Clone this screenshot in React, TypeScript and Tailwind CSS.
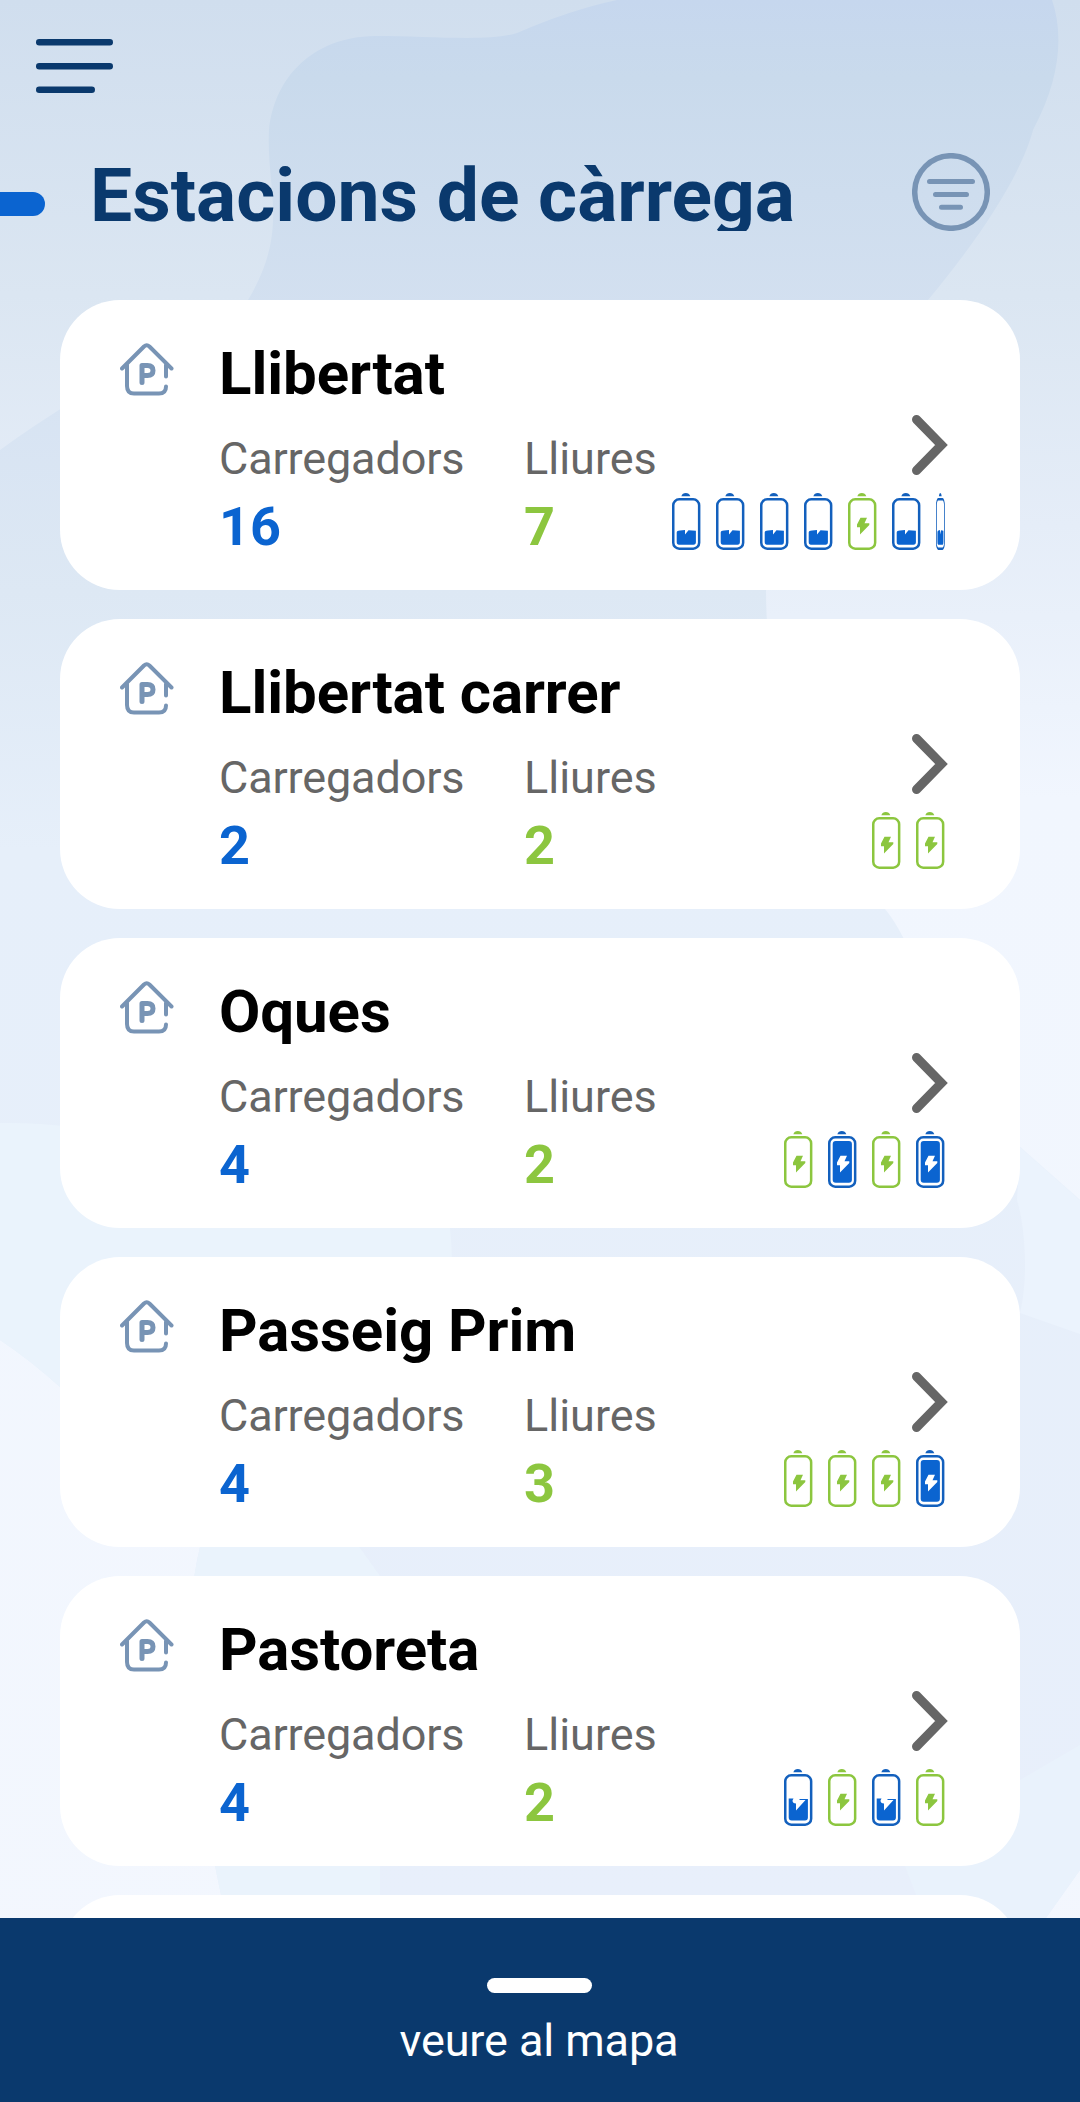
type Charge = 'free' | 'low' | 'half' | 'full';

type Station = {
  name: string;
  chargers: number;
  free: number;
  batteries: Charge[];
  cut?: boolean;
};

const stations: Station[] = [
  { name: 'Llibertat', chargers: 16, free: 7, batteries: ['low', 'low', 'low', 'low', 'free', 'low', 'low'], cut: true },
  { name: 'Llibertat carrer', chargers: 2, free: 2, batteries: ['free', 'free'] },
  { name: 'Oques', chargers: 4, free: 2, batteries: ['free', 'full', 'free', 'full'] },
  { name: 'Passeig Prim', chargers: 4, free: 3, batteries: ['free', 'free', 'free', 'full'] },
  { name: 'Pastoreta', chargers: 4, free: 2, batteries: ['half', 'free', 'half', 'free'] },
];

function Background() {
  return (
    <svg className="absolute inset-0 h-full w-full" viewBox="0 0 1080 2102" aria-hidden="true">
      <defs>
        <linearGradient id="sky" x1="0" y1="0" x2="0" y2="1">
          <stop offset="0" stopColor="#d0deee" />
          <stop offset="0.14" stopColor="#dbe6f2" />
          <stop offset="0.25" stopColor="#e5edf8" />
          <stop offset="0.38" stopColor="#f1f6fe" />
          <stop offset="1" stopColor="#f3f7fe" />
        </linearGradient>
        <linearGradient id="wave" gradientUnits="userSpaceOnUse" x1="0" y1="300" x2="0" y2="1918">
          <stop offset="0" stopColor="#d4e1f2" />
          <stop offset="0.18" stopColor="#dde8f4" />
          <stop offset="0.34" stopColor="#e6effa" />
          <stop offset="1" stopColor="#e8effb" />
        </linearGradient>
        <linearGradient id="blob" gradientUnits="userSpaceOnUse" x1="0" y1="0" x2="0" y2="310">
          <stop offset="0" stopColor="#c6d7ee" />
          <stop offset="0.25" stopColor="#c9daec" />
          <stop offset="1" stopColor="#d3e0f0" />
        </linearGradient>
      </defs>
      <rect width="1080" height="2102" fill="url(#sky)" />
      <path d="M0 450C90 385 180 340 248 300H928C830 400 766 500 766 590C766 740 830 850 885 909C920 950 960 1090 1020 1147L1080 1200V1870L1046 1918H226C200 1800 175 1650 200 1547C200 1480 120 1430 60 1387Q30 1360 0 1340Z" fill="url(#wave)" />
      <path d="M248 300C290 230 266 190 269 130C274 80 310 37 375 36C430 36 490 42 517 33Q570 10 617 0H1052C1064 35 1060 80 1033 130C1020 180 970 250 928 300Z" fill="url(#blob)" />
      <path d="M0 1123C150 1120 300 1190 450 1228C460 1320 430 1450 340 1520L380 1576V1918H226C200 1800 175 1650 200 1547C200 1480 120 1430 60 1387Q30 1360 0 1340Z" fill="#eaf3fc" />
      <path d="M1020 1147L1080 1200V1334L1020 1313C1028 1280 1026 1230 1017 1200Z" fill="#ebf3fd" />
      <path d="M1020 1780L1080 1745V1870L1046 1918H925L905 1866Z" fill="#e9f2fc" />
    </svg>
  );
}

function HouseIcon() {
  return (
    <svg className="h-[54px] w-[54px]" viewBox="0 0 54 54" fill="none" stroke="#7894b5" strokeWidth="4" strokeLinecap="round" strokeLinejoin="round">
      <path d="M2 25.500L24 3.500Q26.700 1 29.400 3.500L51.500 25.500" />
      <path d="M7 22V43Q7 50.500 14 50.500H39Q46 50.500 46 43.500M46 22V33.500" />
      <path d="M22 39.500V22.500H27.500Q33 22.500 33 27.500T27.500 32.500H22" strokeWidth="5" />
    </svg>
  );
}

const bolt = 'M12.500 24.700H19L16.500 30.300H21.300V32L12 41.500V34.300H9V31.500Z';

function Battery({ charge, squeezed }: { charge: Charge; squeezed?: boolean }) {
  const color = charge === 'free' ? '#8cc63f' : '#1360bd';
  return (
    <svg
      className={squeezed ? 'h-[57px] w-[9px] shrink-0' : 'h-[57px] w-[29px] shrink-0'}
      viewBox="0 0 29 57"
      preserveAspectRatio="none"
      fill="none"
    >
      <path d="M9.300 3.300Q10.500 0 13.800 0T18.300 3.300Z" fill={color} />
      <rect x="1.250" y="6.300" width="25.900" height="49.400" rx="6" stroke={color} strokeWidth="2.500" />
      {charge === 'free' && <path d={bolt} fill="#8cc63f" />}
      {charge === 'full' && (
        <>
          <rect x="4.700" y="10" width="19.200" height="41.700" rx="3" fill="#0b64d0" />
          <path d={bolt} fill="#fff" />
        </>
      )}
      {charge === 'half' && (
        <path
          d="M4.700 29.500H9.500L8.500 31.500Q8.500 34.500 12 34.500V41.500L21.500 31H15.500V30H23.900V48.500Q23.900 51.500 21 51.500H7.700Q4.700 51.500 4.700 48.500Z"
          fill="#0b64d0"
        />
      )}
      {charge === 'low' && (
        <path d="M4.700 39.500Q4.700 37.500 8 37.500L13 37V41.500L16.500 37.300L23.900 37.800V49Q23.900 51.700 21.500 51.700H7Q4.700 51.700 4.700 49Z" fill="#0b64d0" />
      )}
    </svg>
  );
}

function StationCard({ station }: { station: Station }) {
  return (
    <article className="flex h-[290px] shrink-0 rounded-[60px] bg-white pl-[60px]">
      <div className="w-[99px] pt-[43px]">
        <HouseIcon />
      </div>
      <div className="pt-[39px]">
        <h2 className="text-[60px] leading-[70px] font-bold tracking-[-0.07px] whitespace-nowrap text-black">{station.name}</h2>
        <div className="flex pt-[23px]">
          <div className="w-[305px]">
            <p className="text-[45px] leading-[53px] tracking-[-0.15px] text-[#666]">Carregadors</p>
            <p className="pt-[10px] text-[54px] leading-[63px] font-bold text-[#0b64d0]">{station.chargers}</p>
          </div>
          <div>
            <p className="text-[45px] leading-[53px] text-[#666]">Lliures</p>
            <p className="pt-[10px] text-[54px] leading-[63px] font-bold text-[#8cc63f]">{station.free}</p>
          </div>
        </div>
      </div>
      <div className="ml-auto flex w-0 flex-col items-end pt-[115px]">
        <div className="mr-[75px] flex flex-col items-end">
          <svg className="mr-[-3px] h-[60px] w-[36px]" viewBox="0 0 36 60" fill="none" stroke="#666" strokeWidth="9" strokeLinecap="round">
            <path d="M4.500 4.500L29.500 30L4.500 55.500" />
          </svg>
          <div className="flex gap-[15px] pt-[18px]">
            {station.batteries.map((charge, i) => (
              <Battery key={i} charge={charge} squeezed={station.cut && i === station.batteries.length - 1} />
            ))}
          </div>
        </div>
      </div>
    </article>
  );
}

export default function App() {
  return (
    <div className="relative h-[2102px] w-[1080px] overflow-hidden font-['Roboto',sans-serif]">
      <Background />
      <div className="relative flex h-full flex-col">
        <header className="h-[300px] shrink-0">
          <button className="block pt-[39px] pl-[36px]" aria-label="Menu">
            <svg className="h-[54px] w-[77px]" viewBox="0 0 77 54" fill="#0a396d">
              <rect width="77" height="6.500" rx="3.200" />
              <rect y="24" width="77" height="6.500" rx="3.200" />
              <rect y="47.500" width="59" height="6.500" rx="3.200" />
            </svg>
          </button>
          <div className="flex items-start pt-[60px]">
            <div className="mt-[39px] h-[24px] w-[45px] rounded-r-full bg-[#0b64d0]" />
            <h1 className="ml-[45px] h-[78px] overflow-hidden text-[75px] leading-[85px] font-bold whitespace-nowrap text-[#0a396d]">
              Estacions de càrrega
            </h1>
            <svg className="mr-[90px] ml-auto h-[78px] w-[78px]" viewBox="0 0 78 78" fill="none" stroke="#7894b5" strokeWidth="5" strokeLinecap="round">
              <circle cx="39" cy="39" r="36.300" strokeWidth="5.500" />
              <path d="M17.500 28.500H60.500M23.500 41.500H54.500M29.500 54.300H48.500" />
            </svg>
          </div>
        </header>
        <main className="flex h-[1618px] shrink-0 flex-col gap-[29px] overflow-hidden px-[60px]">
          {stations.map((station) => (
            <StationCard key={station.name} station={station} />
          ))}
          <article className="h-[290px] shrink-0 rounded-[60px] bg-white" />
        </main>
        <footer className="flex h-[184px] shrink-0 flex-col items-center bg-[#0a396d] pt-[60px] pr-[2px]">
          <div className="h-[15px] w-[105px] rounded-full bg-white" />
          <p className="pt-[21px] text-[45px] leading-[53px] tracking-[-0.1px] text-white">veure al mapa</p>
        </footer>
      </div>
    </div>
  );
}
